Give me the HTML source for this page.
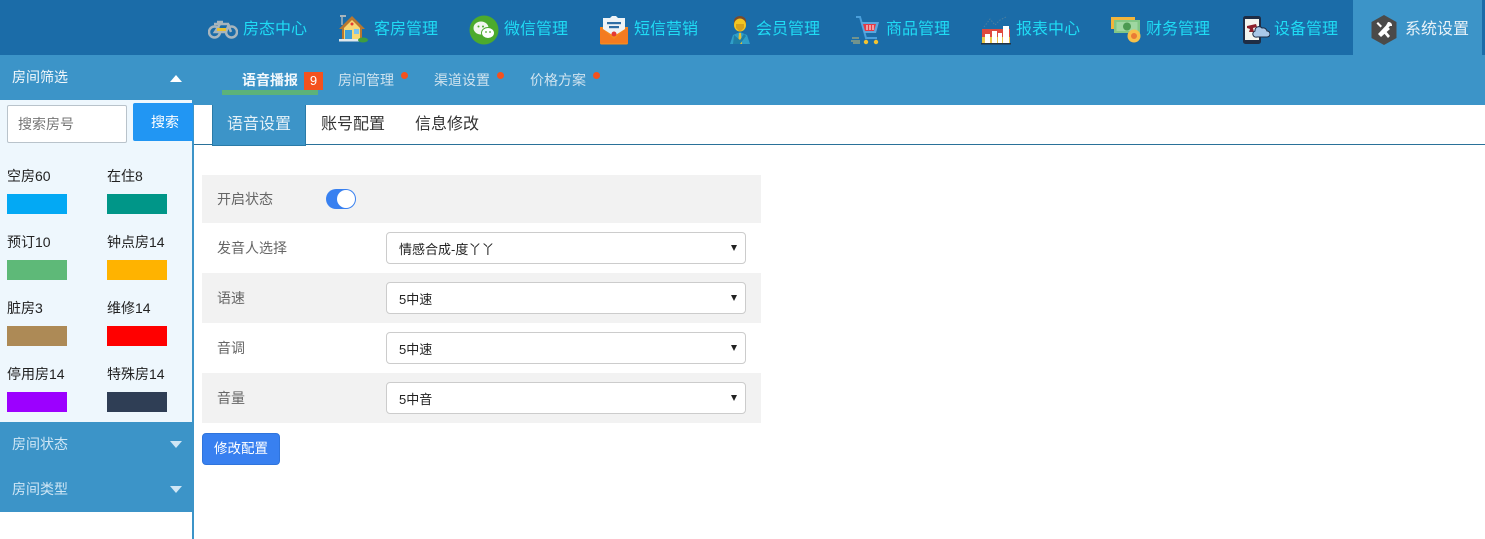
<!DOCTYPE html>
<html lang="zh"><head><meta charset="utf-8"><title>系统设置</title>
<style>
*{box-sizing:border-box}
html,body{margin:0;padding:0;width:1485px;height:539px;overflow:hidden;background:#fff;font-family:"Liberation Sans","Noto Sans CJK SC",sans-serif;color:#333}
.a{position:absolute;white-space:nowrap}
.nav{font-size:16px;color:#1fdcf5;line-height:22px;top:19px}
.ic{position:absolute;top:14px}
.sub{font-size:14px;color:#cfe3ef;line-height:18px;top:71px}
.dot{position:absolute;top:72px;width:7px;height:7px;border-radius:50%;background:#f4511e}
.lab{font-size:14px;color:#222;line-height:18px;left:7px}
.sw{position:absolute;width:60px;height:20px}
.row{position:absolute;left:202px;width:559px}
.rl{position:absolute;left:217px;font-size:14px;color:#666;line-height:18px;white-space:nowrap}
.sel{position:absolute;left:386px;width:360px;height:32px;background:#fff;border:1px solid #ccc;border-radius:4px;font-size:13px;color:#222;line-height:32px;padding-left:12px}
.sel:after{content:"";position:absolute;right:8px;top:12px;border-left:3.5px solid transparent;border-right:3.5px solid transparent;border-top:6px solid #222}
.tab{font-size:16px;line-height:22px;top:114px;color:#333}
.tri{position:absolute;left:170px;border-left:6.500px solid transparent;border-right:6.500px solid transparent}
.sh{font-size:14px;line-height:18px;left:12px;color:#cfe6f5}
</style></head><body>
<div class="a" style="left:0;top:0;width:1485px;height:55px;background:#1b6ca8"></div>
<div class="a" style="left:1353px;top:0;width:129px;height:55px;background:#3c94c8"></div>
<div class="a" style="left:0;top:55px;width:1485px;height:50px;background:#3c94c8"></div>

<svg class="ic" style="left:208px;top:18px" width="30" height="22" viewBox="0 0 30 22"><g fill="none" stroke="#a7b5bd" stroke-width="2.500"><circle cx="6.500" cy="14" r="5.500"/><circle cx="23.500" cy="14" r="5.500"/><path d="M6 6h14l3 8M9 4h6M12 6l-5 8h11l3-8"/></g><rect x="9" y="10" width="9" height="3" fill="#e8c030"/></svg>
<div class="a nav" style="left:243px">房态中心</div>

<svg class="ic" style="left:338px" width="30" height="29" viewBox="0 0 30 29"><path d="M4 2v9" stroke="#a7b5bd" stroke-width="1.500"/><rect x="2" y="1" width="6" height="2" fill="#a7b5bd"/><path d="M14 2L1 15h3v10h20V15h3z" fill="#b9772f"/><path d="M14 6L6 14v11h16V14z" fill="#f7d774"/><circle cx="14" cy="10" r="1.500" fill="#e53935"/><rect x="7" y="16" width="7" height="9" fill="#3f9fd8"/><rect x="16" y="15" width="5" height="5" fill="#7cc4ee"/><rect x="1" y="25" width="20" height="2.500" fill="#dfe7ec"/><ellipse cx="25" cy="26" rx="5" ry="2.500" fill="#3f9d3f"/></svg>
<div class="a nav" style="left:374px">客房管理</div>

<svg class="ic" style="left:469px;top:15px" width="30" height="30" viewBox="0 0 30 30"><circle cx="15" cy="15" r="14.500" fill="#4caa2d"/><ellipse cx="12" cy="13" rx="7.500" ry="6.500" fill="#f2f5ef"/><ellipse cx="19" cy="18" rx="6.500" ry="5.500" fill="#fff" stroke="#4caa2d"/><circle cx="9.500" cy="11.500" r="1" fill="#4caa2d"/><circle cx="14" cy="11.500" r="1" fill="#4caa2d"/><circle cx="17" cy="17" r=".9" fill="#4caa2d"/><circle cx="21" cy="17" r=".9" fill="#4caa2d"/></svg>
<div class="a nav" style="left:504px">微信管理</div>

<svg class="ic" style="left:599px;top:15px" width="30" height="30" viewBox="0 0 30 30"><path d="M1 12h28v16a1.500 1.500 0 0 1-1.500 1.500h-25A1.500 1.500 0 0 1 1 28z" fill="#f58a1f"/><path d="M1 12l14 12 14-12v16H1z" fill="#f47b20"/><path d="M4 3h7l2-2h4l2 2h7v11l-11 7L4 14z" fill="#eef3f6"/><rect x="8" y="7" width="14" height="2.200" fill="#2f6ea5"/><rect x="10" y="11" width="10" height="2.200" fill="#2f6ea5"/><circle cx="15" cy="19" r="2.500" fill="#e53935"/></svg>
<div class="a nav" style="left:634px">短信营销</div>

<svg class="ic" style="left:729px;top:15px" width="22" height="30" viewBox="0 0 22 30"><path d="M5 6a6 5 0 0 1 12 0v3H5z" fill="#7a4a2b"/><ellipse cx="11" cy="10" rx="6" ry="6.500" fill="#f3c623"/><path d="M7 9h8v4l-4 4-4-4z" fill="#d7a21d"/><path d="M1 29l3-9 7-3 7 3 3 9z" fill="#2f9fc9"/><path d="M10 18h2l1 11H9z" fill="#e8c030"/><path d="M5 20l6 5 4-6 2 2-6 8H4z" fill="#1f7fa6"/></svg>
<div class="a nav" style="left:756px">会员管理</div>

<svg class="ic" style="left:851px;top:15px" width="30" height="30" viewBox="0 0 30 30"><path d="M5 2h4l6 21h11" fill="none" stroke="#4a9fdb" stroke-width="2"/><path d="M10 7h18l-3 11H13z" fill="#5aa7de"/><path d="M12 9h13l-2 7H14z" fill="#e53945"/><path d="M16 10v5M19 10v5M22 10v5" stroke="#fff"/><circle cx="15" cy="27" r="2.200" fill="#f2c230"/><circle cx="25" cy="27" r="2.200" fill="#f2c230"/><path d="M1 23h7M0 26h9M2 28h7" stroke="#c7ba72" stroke-width="1"/></svg>
<div class="a nav" style="left:886px">商品管理</div>

<svg class="ic" style="left:981px;top:15px" width="30" height="30" viewBox="0 0 30 30"><path d="M3 12l6-8 5 6 5-5 6-3" fill="none" stroke="#4c7f9f" stroke-dasharray="1.500 1.500"/><rect x="1" y="21" width="28" height="8" fill="#e9c84a"/><rect x="1" y="14" width="28" height="8" fill="#df4a3f"/><rect x="4" y="19" width="5" height="9" fill="#fff"/><rect x="11" y="16" width="5" height="12" fill="#fff"/><rect x="17" y="18" width="4" height="10" fill="#fff"/><rect x="22" y="11" width="6" height="17" fill="#fff"/><rect x="0" y="28" width="30" height="1.500" fill="#234"/></svg>
<div class="a nav" style="left:1016px">报表中心</div>

<svg class="ic" style="left:1111px;top:16px" width="30" height="27" viewBox="0 0 30 27"><rect x="0" y="1" width="24" height="12" fill="#f2b53b"/><rect x="3" y="4" width="26" height="13" fill="#82c785"/><rect x="5.500" y="6" width="21" height="9" fill="#9fd7a1"/><circle cx="16" cy="10.500" r="4" fill="#4c9a52"/><circle cx="23" cy="20" r="6.500" fill="#f7c04a"/><circle cx="23" cy="20" r="3" fill="#ea7a35"/></svg>
<div class="a nav" style="left:1146px">财务管理</div>

<svg class="ic" style="left:1242px;top:15px" width="28" height="30" viewBox="0 0 28 30"><rect x="1" y="1" width="18" height="28" rx="2.500" fill="#1f2d45"/><rect x="3" y="4" width="14" height="21" fill="#f4f5ef"/><path d="M5 11l9-2 1 3-4 1 1 4H7l1-3-3-1z" fill="#8d1f2a"/><path d="M13 16a4 4 0 0 1 7-3 4 4 0 0 1 5 3 3 3 0 0 1 0 6H15a3 3 0 0 1-2-6z" fill="#a9c8e8" stroke="#1f2d45"/></svg>
<div class="a nav" style="left:1274px">设备管理</div>

<svg class="ic" style="left:1371px;top:15px" width="26" height="30" viewBox="0 0 26 30"><path d="M13 0l12.500 7v16L13 30 .5 23V7z" fill="#4b4a49"/><path d="M7 7l4 4-1.500 1.500-4-4zM17 7a3.500 3.500 0 0 1 4 4l-2 0-1.500 1.500L19 14l-9 8-3-3 8-8.500z" fill="#fff"/><path d="M14 15l5 6-2 2-5-6z" fill="#fff"/></svg>
<div class="a nav" style="left:1405px;color:#e8f2f8">系统设置</div>

<!-- sub nav -->
<div class="a sub" style="left:242px;color:#f2f8fc;font-weight:bold">语音播报</div>
<div class="a" style="left:304px;top:72px;width:19px;height:18px;background:#f4511e;color:#fff;font-size:13px;line-height:18px;text-align:center">9</div>
<div class="a" style="left:222px;top:90px;width:96px;height:5px;background:#5cb27a"></div>
<div class="a sub" style="left:338px">房间管理</div><div class="dot" style="left:401px"></div>
<div class="a sub" style="left:434px">渠道设置</div><div class="dot" style="left:497px"></div>
<div class="a sub" style="left:530px">价格方案</div><div class="dot" style="left:593px"></div>

<!-- sidebar -->
<div class="a" style="left:0;top:100px;width:192px;height:322px;background:#eef7fd"></div>
<div class="a" style="left:192px;top:100px;width:2px;height:439px;background:#3c94c8"></div>
<div class="a" style="left:0;top:55px;width:192px;height:45px;background:#3c94c8"></div>
<div class="a" style="left:12px;top:68px;font-size:14px;line-height:18px;color:#f4f9fc">房间筛选</div>
<div class="tri" style="top:75px;border-bottom:7px solid #fff"></div>
<div class="a" style="left:7px;top:105px;width:120px;height:38px;background:#fff;border:1px solid #b9c3cb;border-radius:2px;font-size:14px;line-height:37px;padding-left:10px;color:#757575">搜索房号</div>
<div class="a" style="left:133px;top:103px;width:60px;height:38px;background:#2196f3;border-radius:2px 0 0 2px;color:#fff;font-size:14px;line-height:38px;padding-left:18px">搜索</div>

<div class="a lab" style="top:167px">空房60</div><div class="a lab" style="top:167px;left:107px">在住8</div>
<div class="sw" style="left:7px;top:194px;background:#03a9f4"></div><div class="sw" style="left:107px;top:194px;background:#009688"></div>
<div class="a lab" style="top:233px">预订10</div><div class="a lab" style="top:233px;left:107px">钟点房14</div>
<div class="sw" style="left:7px;top:260px;background:#5eb978"></div><div class="sw" style="left:107px;top:260px;background:#ffb300"></div>
<div class="a lab" style="top:299px">脏房3</div><div class="a lab" style="top:299px;left:107px">维修14</div>
<div class="sw" style="left:7px;top:326px;background:#ad8a56"></div><div class="sw" style="left:107px;top:326px;background:#ff0000"></div>
<div class="a lab" style="top:365px">停用房14</div><div class="a lab" style="top:365px;left:107px">特殊房14</div>
<div class="sw" style="left:7px;top:392px;background:#9c00ff"></div><div class="sw" style="left:107px;top:392px;background:#2f3e55"></div>

<div class="a" style="left:0;top:422px;width:194px;height:90px;background:#3c94c8"></div>
<div class="a sh" style="top:435px">房间状态</div><div class="tri" style="top:441px;border-top:7px solid #cfe6f5"></div>
<div class="a sh" style="top:480px">房间类型</div><div class="tri" style="top:486px;border-top:7px solid #cfe6f5"></div>

<!-- tabs -->
<div class="a" style="left:194px;top:144px;width:1291px;height:1px;background:#2a7199"></div>
<div class="a" style="left:212px;top:105px;width:94px;height:41px;background:#3c94c8;border:1px solid #2a7ba8;border-top:0"></div>
<div class="a tab" style="left:227px;color:#e4f1f8">语音设置</div>
<div class="a tab" style="left:321px">账号配置</div>
<div class="a tab" style="left:415px">信息修改</div>

<!-- form -->
<div class="row" style="top:175px;height:48px;background:#f2f2f2"></div>
<div class="rl" style="top:190px">开启状态</div>
<div class="a" style="left:326px;top:189px;width:30px;height:20px;border-radius:10px;background:#3880f0"></div>
<div class="a" style="left:337px;top:190px;width:18px;height:18px;border-radius:50%;background:#fff"></div>
<div class="rl" style="top:239px">发音人选择</div>
<div class="sel" style="top:232px;line-height:33px">情感合成-度丫丫</div>
<div class="row" style="top:273px;height:50px;background:#f2f2f2"></div>
<div class="rl" style="top:289px">语速</div>
<div class="sel" style="top:282px;line-height:33px">5中速</div>
<div class="rl" style="top:339px">音调</div>
<div class="sel" style="top:332px;line-height:33px">5中速</div>
<div class="row" style="top:373px;height:50px;background:#f2f2f2"></div>
<div class="rl" style="top:389px">音量</div>
<div class="sel" style="top:382px;line-height:33px">5中音</div>
<div class="a" style="left:202px;top:433px;width:78px;height:32px;background:#3880f0;border:1px solid #2f74dc;border-radius:4px;color:#fff;font-size:13.500px;line-height:30px;text-align:center">修改配置</div>
</body></html>
